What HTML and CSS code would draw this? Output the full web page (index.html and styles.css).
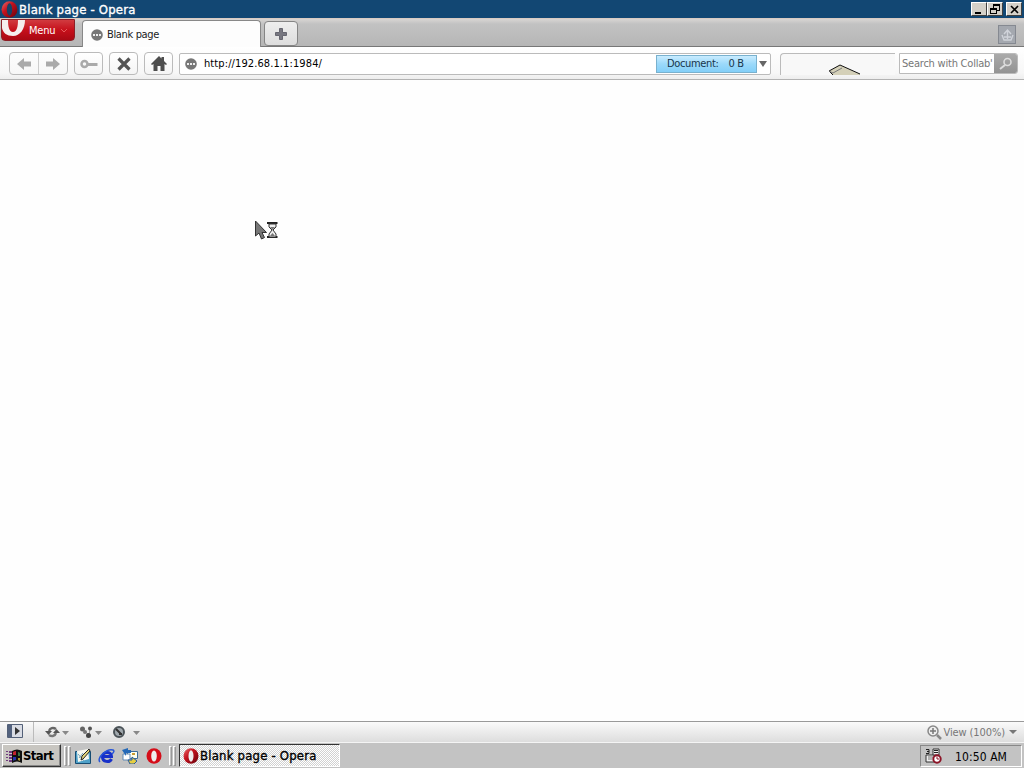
FILE: index.html
```
<!DOCTYPE html>
<html lang="en">
<head>
    <meta charset="UTF-8">
    <title>Blank page - Opera</title>
    <link rel="stylesheet" href="styles.css">
</head>
<body>
    <svg class="defs" width="0" height="0">
        <defs>
            <linearGradient id="red" x1="0" y1="0" x2="1" y2="1">
                <stop offset="0" stop-color="#e87070"/>
                <stop offset=".4" stop-color="#c5121e"/>
                <stop offset="1" stop-color="#66000b"/>
            </linearGradient>
        </defs>
        <symbol id="opera" viewBox="0 0 16 16">
            <ellipse cx="8" cy="8" rx="7.5" ry="7.8" fill="url(#red)"/>
            <ellipse class="hole" cx="8" cy="8" rx="2.5" ry="5.8"/>
        </symbol>
        <symbol id="globe" viewBox="0 0 12 12">
            <circle cx="6" cy="6" r="5.8" fill="#777"/>
            <path d="M2 5h2v2H2zM5 5h2v2H5zM8 5h2v2H8z" fill="#eee"/>
        </symbol>
    </svg>

    <header class="titlebar">
        <svg class="title-logo" width="17" height="17"><use href="#opera"/></svg>
        <span class="title-text">Blank page - Opera</span>
        <div class="window-buttons">
            <button><svg width="13" height="11"><path d="M2 8h6v2H2z"/></svg></button>
            <button><svg width="13" height="11"><path d="M4 0h7v7H8V6h2V2H5v2H4zM1 4h7v6H1zM2 6v3h5V6z" fill-rule="evenodd"/></svg></button>
            <button class="close"><svg width="13" height="11"><path d="M3 2l7 7M10 2L3 9" stroke="#000" stroke-width="1.6"/></svg></button>
        </div>
    </header>

    <div class="tabbar">
        <button class="menu-btn">
            <svg class="menu-logo" width="23" height="17" viewBox="0 0 23 17"><path d="M0 0h6c0 6 1 12 5 12s5-6 5-12h7c0 9-5 16-12 16C5 16 1 13 0 8z" fill="#f5eeee"/></svg>
            <span>Menu</span>
            <svg width="8" height="5"><path d="M1 1l3 3 3-3" fill="none" stroke="#e65b5b"/></svg>
        </button>
        <div class="tab">
            <svg width="12" height="12"><use href="#globe"/></svg>
            <span>Blank page</span>
        </div>
        <button class="new-tab"><svg width="12" height="12"><path d="M4.500 .5h3v4h4v3h-4v4h-3v-4h-4v-3h4z" fill="#777780" stroke="#666670"/></svg></button>
        <button class="trash"><svg width="17" height="18"><path d="M5 8l3.500-4L12 8M3 9l2 5h7l2-5M5 11h7M8.500 6v7" fill="none" stroke="#d0d3da" stroke-width="1.400"/></svg></button>
    </div>

    <div class="toolbar">
        <div class="history">
            <button><svg width="14" height="12"><path d="M0 6l7-6v3.500h7v5H7V12z" fill="#aaa"/></svg></button>
            <button><svg width="14" height="12"><path d="M14 6L7 0v3.500H0v5h7V12z" fill="#aaa"/></svg></button>
        </div>
        <button class="tool"><svg width="18" height="10"><circle cx="4.500" cy="5" r="3" fill="none" stroke="#aaa" stroke-width="2.500"/><path d="M8 4h9.500v3H8z" fill="#aaa"/></svg></button>
        <button class="tool"><svg width="16" height="14"><path d="M2.500 1.500l11 11M13.500 1.500l-11 11" stroke="#555" stroke-width="3.200"/></svg></button>
        <button class="tool"><svg width="16" height="15"><path d="M0 8l8-8 2.500 2.500V1H13v4l3 3-1 1-1.500-1V15h-4v-5h-3v5h-4V8L1 9z" fill="#4d4d4d"/></svg></button>
        <div class="address">
            <svg width="12" height="12"><use href="#globe"/></svg>
            <span class="url">http://192.68.1.1:1984/</span>
            <div class="progress"><span class="document">Document:</span><span>0 B</span></div>
            <svg class="drop" width="8" height="6"><path d="M0 0h8L4 6z" fill="#666"/></svg>
        </div>
        <div class="speed">
            <svg width="33" height="12"><path d="M1 8L12 2l20 9v1H5z" fill="#d4d0b8"/><path d="M5 12L1 8l11-6 20 9" fill="none" stroke="#111"/><path d="M1 8l4 2 9-5" fill="none" stroke="#777"/></svg>
        </div>
        <div class="search">
            <span>Search with Collab'</span>
            <button><svg width="18" height="16"><circle cx="10.500" cy="6" r="3.500" fill="none" stroke="#ddd" stroke-width="1.600"/><path d="M8 9l-5 4" stroke="#ddd" stroke-width="2"/></svg></button>
        </div>
    </div>

    <main class="page">
        <svg class="cursor" width="25" height="22">
            <path d="M1.500 1v15l3.500-3 2.500 6 3-1.500-2.500-5h4.500z" fill="#777" stroke="#333"/>
            <path d="M13 3h10.500M13 17h10.500" stroke="#222" stroke-width="2"/>
            <path d="M15 4v3l3 3-3 4v3h7v-3l-3-4 3-3V4z" fill="#eee" stroke="#333"/>
            <path d="M16 7h5l-2.500 3zM16 16l2.500-3 2.500 3z" fill="#777"/>
        </svg>
    </main>

    <div class="statusbar">
        <div class="panel-toggle"><svg width="16" height="14"><path d="M.5.5h15v13H.5z" fill="#d9dce4" stroke="#536078"/><path d="M1 1h4v12H1z" fill="#53627e"/><path d="M8 3l5 4-5 4z" fill="#333"/></svg></div>
        <div class="status-icons">
            <svg width="24" height="12"><path d="M4 5c1-3 4-4 7-2" fill="none" stroke="#666" stroke-width="2.400"/><path d="M0 5h7l-3.500 4z" fill="#555"/><path d="M11 7c-1 3-4 4-7 2" fill="none" stroke="#777" stroke-width="2.400"/><path d="M8 7h7l-3.500-4z" fill="#555"/><path d="M17 5h7l-3.500 4z" fill="#888"/></svg>
            <svg width="24" height="12"><path d="M3 3l7 6 1-6" fill="none" stroke="#999"/><circle cx="3.500" cy="3" r="2.500" fill="#666"/><circle cx="11" cy="2.500" r="2" fill="#555"/><circle cx="6" cy="6" r="2" fill="#777"/><circle cx="9.500" cy="9.500" r="2.500" fill="#444"/><path d="M16 5h7l-3.500 4z" fill="#888"/></svg>
            <svg width="29" height="12"><circle cx="6" cy="6" r="5" fill="#a0a8ad" stroke="#4b5358" stroke-width="2"/><path d="M3 3l5 5M6 8h3" stroke="#333" stroke-width="2"/><path d="M20 5h7l-3.500 4z" fill="#888"/></svg>
        </div>
        <div class="view">
            <svg width="15" height="15"><circle cx="6" cy="6" r="5" fill="#eee" stroke="#888" stroke-width="1.500"/><path d="M3 6h6M6 3v6" stroke="#777" stroke-width="1.500"/><path d="M10 10l4 4" stroke="#888" stroke-width="2.500"/></svg>
            <span>View (100%)</span>
            <svg class="drop" width="8" height="5"><path d="M0 0h8L4 4z" fill="#777"/></svg>
        </div>
    </div>

    <footer class="taskbar">
        <button class="start">
            <svg width="17" height="14"><path d="M0 2h2v1H0zM3 2h3v2H3zM0 5h2v1H0zM3 5h3v2H3zM0 8h2v1H0zM3 8h3v2H3zM0 11h2v1H0zM3 11h3v2H3z" fill="#713b80"/><path d="M6 2q5-3 10 0v12q-5-3-10 0z" fill="#111"/><path d="M7 3q2-1 3-1v4H7z" fill="#c3222e"/><path d="M12 3q1 0 2 1v3h-2z" fill="#397544"/><path d="M7 8h3v3q-2 0-3 1z" fill="#2433ad"/><path d="M12 9h2v3l-2-1z" fill="#a99331"/></svg>
            <span>Start</span>
        </button>
        <i class="grip"></i><i class="grip second"></i>
        <div class="quick">
            <svg width="16" height="16"><path d="M.5 3.500h15v12H.5z" fill="#4ea1c9" stroke="#164c72"/><path d="M2 3l11-2 1 10-11 3z" fill="#f7f7ef"/><path d="M3 6l6 7M4 10l4-5" stroke="#75a5bc"/><path d="M6 12l1-4 7-7 1 2-7 8z" fill="#e4d67a" stroke="#222"/></svg>
            <svg width="17" height="16"><path d="M13.500 11c-2 4-9 3-9-2 0-6 9-6 9-.5H5" fill="none" stroke="#1730c9" stroke-width="3"/><path d="M2 14C-2 10 9 0 15 2c2 1 0 3-1 4" fill="none" stroke="#2755d7" stroke-width="1.500"/></svg>
            <svg width="17" height="16"><path d="M5.500 3.500h10v7h-10z" fill="#ffe" stroke="#3c6b9a"/><path d="M10 6h3" stroke="#cb9b32" stroke-width="2"/><path d="M1 6h7v6H1z" fill="#fff" stroke="#638bb5"/><path d="M0 2l6-2v2h3v3H4v3z" fill="#2469b8"/><path d="M6 12h4V9l5 4-3 3H8z" fill="#e6ce42" stroke="#285b9c"/></svg>
            <svg width="16" height="16"><ellipse cx="8" cy="8" rx="7.500" ry="7.700" fill="#d50d19"/><ellipse cx="8" cy="8" rx="2.800" ry="5.500" fill="#eee"/></svg>
        </div>
        <i class="grip third"></i><i class="grip second"></i>
        <div class="task">
            <svg width="16" height="16"><use href="#opera"/></svg>
            <span>Blank page - Opera</span>
        </div>
        <div class="tray">
            <svg width="18" height="16"><path d="M1 7h12v7H1z" fill="#eee" stroke="#333"/><path d="M8 1h6v6H8z" fill="#eee" stroke="#333"/><path d="M1 1.500h3v4H1M2 3.500h2M9 2.500h4M9 4.500h4" fill="none" stroke="#222"/><path d="M3 9h5M3 11h4" stroke="#777"/><circle cx="12" cy="11" r="3.700" fill="#fff" stroke="#8c1427" stroke-width="2"/><path d="M12 8.500V11h2" fill="none" stroke="#8c1427"/></svg>
            <span class="clock">10:50 AM</span>
        </div>
    </footer>
</body>
</html>
```
FILE: styles.css
```
* {
    box-sizing: border-box;
}

body {
    margin: 0;
    width: 1024px;
    height: 768px;
    overflow: hidden;
    display: flex;
    flex-direction: column;
    background: #fefefe;
    font-family: "DejaVu Sans Condensed", "DejaVu Sans", sans-serif;
    font-stretch: condensed;
    font-size: 11px;
    letter-spacing: -0.35px;
    color: #222;
}

svg {
    display: block;
    flex: none;
}

span {
    white-space: pre;
}

button {
    display: flex;
    align-items: center;
    justify-content: center;
    margin: 0;
    padding: 0;
    font: inherit;
    letter-spacing: inherit;
}

.defs {
    position: absolute;
}

.hole {
    fill: var(--hole, #eee);
}

/* Window title */
.titlebar {
    --hole: #174266;
    height: 18px;
    flex: none;
    display: flex;
    align-items: center;
    background: #124773;
    color: #fff;
    padding: 0 2px 0 1px;
}

.title-text {
    margin-left: 1px;
    font-size: 13px;
    letter-spacing: 0.2px;
    -webkit-text-stroke: 0.35px #fff;
}

.window-buttons {
    display: flex;
    margin-left: auto;
}

.window-buttons button {
    width: 16px;
    height: 14px;
    background: #d4d0c8;
    border: 1px solid;
    border-color: #fff #404040 #404040 #fff;
}

.window-buttons .close {
    margin-left: 3px;
}

/* Tabs */
.tabbar {
    height: 29px;
    flex: none;
    display: flex;
    background: linear-gradient(#d8d5d3, #c2c2c2 5px, #b6b6b6);
    border-top: 1px solid #d9cbc2;
    border-bottom: 1px solid #777;
}

.menu-btn {
    width: 74px;
    height: 22px;
    margin-left: 1px;
    justify-content: flex-start;
    border: 1px solid #8c2027;
    border-radius: 0 0 4px 4px;
    background: linear-gradient(#d13b40, #c6101b 50%, #a90813);
    color: #fff;
    letter-spacing: -0.2px;
}

.menu-logo {
    align-self: flex-start;
}

.menu-btn span {
    margin: 0 5px 0 4px;
}

.tab {
    width: 179px;
    height: 28px;
    margin: 1px 0 0 7px;
    padding-left: 8px;
    display: flex;
    align-items: center;
    background: #fdfdfd;
    border: 1px solid #888;
    border-bottom: 0;
    border-radius: 4px 4px 0 0;
}

.tab span {
    margin-left: 4px;
}

.new-tab {
    width: 34px;
    height: 25px;
    margin: 2px 0 0 3px;
    background: linear-gradient(#eee, #ddd);
    border: 1px solid #858585;
    border-radius: 4px;
}

.trash {
    width: 18px;
    height: 19px;
    margin: 6px 8px 0 auto;
    border: 1px solid #858991;
    background: #a4a8af;
}

/* Navigation */
.toolbar {
    height: 33px;
    flex: none;
    display: flex;
    align-items: center;
    padding: 1px 5px 0 9px;
    background: linear-gradient(#fff, #f7f7f7 80%, #eee);
    border-bottom: 1px solid #b3b3b3;
}

.history {
    display: flex;
    width: 59px;
    height: 23px;
    border: 1px solid #bbb;
    border-radius: 4px;
}

.history button {
    flex: 1;
    border: 0;
    background: none;
}

.history button + button {
    border-left: 1px solid #ccc;
}

.tool {
    width: 29px;
    height: 23px;
    margin-left: 6px;
    background: linear-gradient(#fff, #f5f5f5);
    border: 1px solid #bbb;
    border-radius: 4px;
}

.address {
    width: 592px;
    height: 22px;
    margin-left: 6px;
    display: flex;
    align-items: center;
    padding-left: 5px;
    background: #fff;
    border: 1px solid #bbb;
    border-radius: 2px;
}

.url {
    margin-left: 7px;
    color: #000;
    letter-spacing: 0.1px;
}

.progress {
    display: flex;
    width: 101px;
    height: 18px;
    margin-left: auto;
    align-items: center;
    padding-left: 10px;
    border: 1px solid #79b1ce;
    background: linear-gradient(#c9ecff, #9bd9fa 50%, #83cff8);
    color: #17354c;
}

.document {
    margin-right: 10px;
}

.address .drop {
    margin: 0 3px 0 2px;
}

.speed {
    width: 115px;
    height: 22px;
    margin-left: 9px;
    padding: 9px 0 0 47px;
    border: 1px solid #bbb;
    border-width: 1px 0 0 1px;
    border-radius: 4px 0 0 0;
    background: #f8f8f8;
}

.search {
    width: 119px;
    height: 21px;
    margin-left: 4px;
    display: flex;
    align-items: center;
    overflow: hidden;
    background: #fff;
    border: 1px solid #bbb;
    border-radius: 0 3px 3px 0;
    color: #777;
    letter-spacing: -0.22px;
}

.search span {
    width: 94px;
    padding-left: 2px;
    overflow: hidden;
}

.search button {
    flex: 1;
    height: 20px;
    border: 0;
    background: linear-gradient(#aaa, #929292);
}

.page {
    flex: 1;
    background: #fefefe;
}

/* Mouse pointer, over the page */
.cursor {
    position: absolute;
    left: 254px;
    top: 220px;
}

/* Browser status */
.statusbar {
    height: 21px;
    flex: none;
    display: flex;
    align-items: center;
    border-top: 1px solid #999;
    background: linear-gradient(#fafafa, #ddd);
    color: #777;
}

.panel-toggle {
    width: 34px;
    height: 20px;
    padding: 2px 0 0 7px;
    border-right: 1px solid #bbb;
}

.status-icons {
    display: flex;
    gap: 10px;
    margin-left: 11px;
}

.view {
    display: flex;
    align-items: center;
    margin: 0 7px 0 auto;
    letter-spacing: -0.1px;
}

.view span {
    margin: 0 4px 0 1px;
}

/* Desktop taskbar */
.taskbar {
    height: 26px;
    flex: none;
    display: flex;
    align-items: center;
    padding: 0 2px;
    border-top: 1px solid #f4f4f4;
    background: #c3c3c3;
    color: #000;
}

.start {
    width: 59px;
    height: 23px;
    justify-content: flex-start;
    padding-left: 3px;
    background: #c8c6c1;
    border: 1px solid;
    border-color: #fff #333 #333 #fff;
    box-shadow: inset -1px -1px #888;
    font-size: 13px;
    font-weight: bold;
    letter-spacing: -0.6px;
}

.start span {
    margin-left: 0;
}

.grip {
    width: 3px;
    height: 20px;
    margin-left: 3px;
    border: 1px solid;
    border-color: #fff #999 #999 #fff;
}

.grip.second {
    margin-left: 1px;
}

.quick {
    display: flex;
    gap: 7px;
    margin-left: 4px;
}

.grip.third {
    margin-left: 7px;
}

.task {
    width: 161px;
    height: 23px;
    margin-left: 3px;
    display: flex;
    align-items: center;
    padding-left: 3px;
    background: repeating-conic-gradient(#fff 0 25%, #d1d1d1 0 50%) 0 0 / 2px 2px;
    border: 1px solid;
    border-color: #333 #fff #fff #333;
    font-size: 13px;
    letter-spacing: 0.2px;
    -webkit-text-stroke: 0.35px #000;
}

.task span {
    margin-left: 1px;
}

.tray {
    width: 102px;
    height: 22px;
    margin-left: auto;
    display: flex;
    align-items: center;
    padding-left: 4px;
    border: 1px solid;
    border-color: #888 #fff #fff #888;
}

.clock {
    margin: 2px 0 0 12px;
    font-size: 12px;
    letter-spacing: 0.1px;
}
```
